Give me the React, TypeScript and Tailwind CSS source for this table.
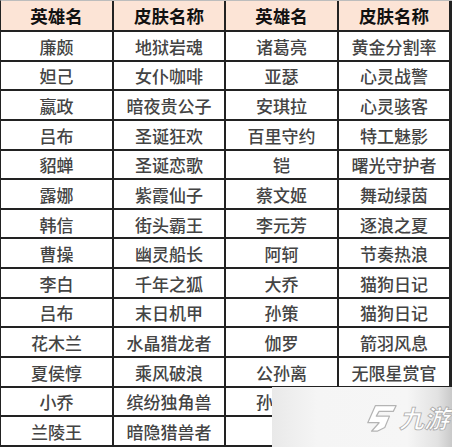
import React from "react";

const rows: string[][] = [
  ["廉颇", "地狱岩魂", "诸葛亮", "黄金分割率"],
  ["妲己", "女仆咖啡", "亚瑟", "心灵战警"],
  ["嬴政", "暗夜贵公子", "安琪拉", "心灵骇客"],
  ["吕布", "圣诞狂欢", "百里守约", "特工魅影"],
  ["貂蝉", "圣诞恋歌", "铠", "曙光守护者"],
  ["露娜", "紫霞仙子", "蔡文姬", "舞动绿茵"],
  ["韩信", "街头霸王", "李元芳", "逐浪之夏"],
  ["曹操", "幽灵船长", "阿轲", "节奏热浪"],
  ["李白", "千年之狐", "大乔", "猫狗日记"],
  ["吕布", "末日机甲", "孙策", "猫狗日记"],
  ["花木兰", "水晶猎龙者", "伽罗", "箭羽风息"],
  ["夏侯惇", "乘风破浪", "公孙离", "无限星赏官"],
  ["小乔", "缤纷独角兽", "孙尚香", ""],
  ["兰陵王", "暗隐猎兽者", "", ""],
];

const headers = ["英雄名", "皮肤名称", "英雄名", "皮肤名称"];

export default function App() {
  return (
    <div className="relative w-[452px] h-[447px] overflow-hidden bg-white font-['Noto_Sans_CJK_SC','Noto_Sans',sans-serif]">
      <div className="border-t border-t-[#bdbdbd] border-l border-l-[#222] bg-[#222] pb-[2px] pr-[1px] w-[452px] grid grid-cols-[111px_110px_111px_110px] grid-rows-[29px_repeat(14,27.64px)] gap-x-[2px] gap-y-[2px]">
        {headers.map((h, i) => (
          <div
            key={"h" + i}
            className="bg-[#fce4d6] flex items-center justify-center text-[17.5px] font-bold text-[#111] leading-none"
          >
            {h}
          </div>
        ))}
        {rows.map((r, ri) =>
          r.map((c, ci) => (
            <div
              key={ri + "-" + ci}
              className="bg-white flex items-center justify-center text-[17px] font-medium text-[#444] leading-none pt-[1px]"
            >
              {c}
            </div>
          ))
        )}
      </div>

      <div className="absolute left-[272px] top-[387px] w-[180px] h-[60px] bg-[linear-gradient(to_right,#e9e9e9_0%,#f5f5f5_25%,#f6f6f6_75%,#e2e2e2_92%,#c9c9c9_100%)] flex items-center justify-end pr-[3px] gap-[1px]">
        <svg width="34" height="30" viewBox="0 0 36 30" className="mt-[1px]">
          <path
            d="M12 2 L34 2 L31 8 L16 8 L13 13 L27 13 L22 25 L14 29 L8 29 L16 20 L8 20 L4 20 Z"
            fill="#ffffff"
            stroke="#b4b4b4"
            strokeWidth="1.3"
            strokeLinejoin="round"
          />
        </svg>
        <span className="text-[25px] italic font-bold text-white leading-none [-webkit-text-stroke:0.8px_#acacac] mt-[1px] font-['Noto_Sans_CJK_SC',sans-serif]">
          九游
        </span>
      </div>
    </div>
  );
}
